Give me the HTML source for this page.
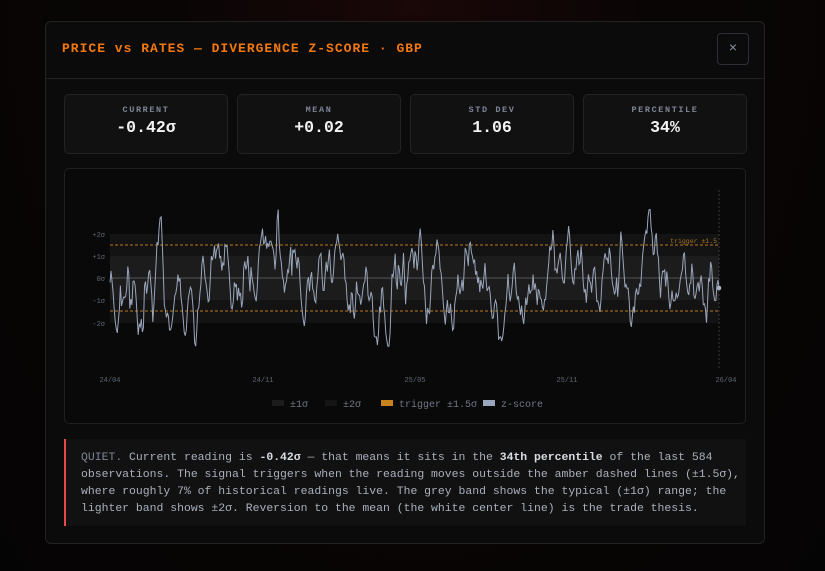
<!DOCTYPE html>
<html><head><meta charset="utf-8"><style>
*{margin:0;padding:0;box-sizing:border-box}
body{width:825px;height:571px;overflow:hidden;background:#070505;font-family:"Liberation Mono",monospace;position:relative}
.bgglow{position:absolute;left:0;top:0;width:825px;height:571px;background:radial-gradient(ellipse at 50% 0%,#1a0707 0%,#0a0505 40%,#050404 100%)}
.modal{position:absolute;left:45px;top:21px;width:720px;height:523px;background:#0b0b0b;border:1px solid #232323;border-radius:6px}
.hdr{position:absolute;left:0;top:0;width:718px;height:57px;border-bottom:1px solid #222}
.title{position:absolute;left:16px;top:19px;color:#f2780f;font-weight:bold;font-size:13px;letter-spacing:1px;white-space:nowrap}
.close{position:absolute;left:671px;top:11px;width:32px;height:32px;border:1px solid #2c2f36;border-radius:4px;color:#8a92a3;font-size:14px;text-align:center;line-height:30px}
.card{position:absolute;top:72px;height:60px;width:164px;background:#111;border:1px solid #232323;border-radius:5px;text-align:center}
.lbl{margin-top:10px;font-size:8.5px;letter-spacing:1.6px;color:#7d8597;font-weight:bold}
.val{margin-top:3px;font-size:16.5px;font-weight:bold;color:#f3f3f3}
.chart{position:absolute;left:18px;top:146px;width:682px;height:256px;border:1px solid #1f1f1f;border-radius:5px;background:#090909}
.note{position:absolute;left:18px;top:417px;width:682px;height:87px;background:#111;border-left:2px solid #e5484d;padding:10px 0 0 15px;font-size:11.45px;line-height:17px;color:#a9b0bd;white-space:pre}
.note b{color:#d9dde4}
.q{color:#7c8597}
.leg{position:absolute;top:231px;font-size:10px;color:#6e7685;white-space:nowrap}
.sw{display:inline-block;width:12px;height:6px;vertical-align:middle;margin-right:6px;margin-top:-2px}
</style></head><body>
<div class="bgglow"></div>
<div class="modal">
 <div class="hdr"><div class="title">PRICE vs RATES — DIVERGENCE Z-SCORE · GBP</div><div class="close">×</div></div>
 <div class="card" style="left:18px"><div class="lbl">CURRENT</div><div class="val">-0.42σ</div></div>
 <div class="card" style="left:191px"><div class="lbl">MEAN</div><div class="val">+0.02</div></div>
 <div class="card" style="left:364px"><div class="lbl">STD DEV</div><div class="val">1.06</div></div>
 <div class="card" style="left:537px"><div class="lbl">PERCENTILE</div><div class="val">34%</div></div>
 <div class="chart">
  <div class="leg" style="left:207px"><span class="sw" style="background:#1c1c1c"></span>±1σ</div>
  <div class="leg" style="left:260px"><span class="sw" style="background:#151515"></span>±2σ</div>
  <div class="leg" style="left:316px"><span class="sw" style="background:#c8821e"></span>trigger ±1.5σ</div>
  <div class="leg" style="left:418px"><span class="sw" style="background:#9aa6bb"></span>z-score</div>
 </div>
 <div class="note"><span class="q">QUIET.</span> Current reading is <b>-0.42σ</b> — that means it sits in the <b>34th percentile</b> of the last 584
observations. The signal triggers when the reading moves outside the amber dashed lines (±1.5σ),
where roughly 7% of historical readings live. The grey band shows the typical (±1σ) range; the
lighter band shows ±2σ. Reversion to the mean (the white center line) is the trade thesis.</div>
</div>
<svg id="sv" width="825" height="571" style="position:absolute;left:0;top:0" font-family="Liberation Mono, monospace">
 <rect x="110" y="234" width="609" height="89" fill="#131313"/>
 <rect x="110" y="256" width="609" height="44" fill="#1c1c1c"/>
 <line x1="110" y1="278" x2="719" y2="278" stroke="#4a4a4a" stroke-width="1.2"/>
 <line x1="110" y1="245" x2="719" y2="245" stroke="#b87a1c" stroke-dasharray="3,2"/>
 <line x1="110" y1="311" x2="719" y2="311" stroke="#b87a1c" stroke-dasharray="3,2"/>
 <line x1="719" y1="190" x2="719" y2="370" stroke="#3a3a3a" stroke-dasharray="2,2"/>
 <g fill="#5f6675" font-size="7" text-anchor="end">
  <text x="105" y="237">+2σ</text><text x="105" y="259">+1σ</text><text x="105" y="281">0σ</text><text x="105" y="303">-1σ</text><text x="105" y="326">-2σ</text>
 </g>
 <g fill="#5f6675" font-size="7" text-anchor="middle">
  <text x="110" y="382">24/04</text><text x="263" y="382">24/11</text><text x="415" y="382">25/05</text><text x="567" y="382">25/11</text><text x="726" y="382">26/04</text>
 </g>
 <text x="717" y="243" fill="#a8731c" font-size="6.5" text-anchor="end">trigger ±1.5</text>
 <polyline id="pl" fill="none" stroke="#9aa6bb" stroke-width="1" points=""/>
 <circle cx="719" cy="288" r="2.3" fill="#aab3c4"/>
</svg>
<script>
var s=987654;function r(){s=(s*1103515245+12345)%2147483648;return s/2147483648;}
function g(){return (r()+r()+r()+r()-2)*1.7;}
var n=584,z=0,v=0,pts=[];
for(var i=0;i<n;i++){v=0.35*v+0.55*g()-0.13*z;z=z+v;if(z>3.9)z=3.9;if(z<-3.1)z=-3.1;
var x=110+i*609/(n-1);if(i==n-1)z=-0.45;pts.push(x.toFixed(1)+","+(278-z*22).toFixed(1));}
document.getElementById("pl").setAttribute("points",pts.join(" "));
</script>
</body></html>
